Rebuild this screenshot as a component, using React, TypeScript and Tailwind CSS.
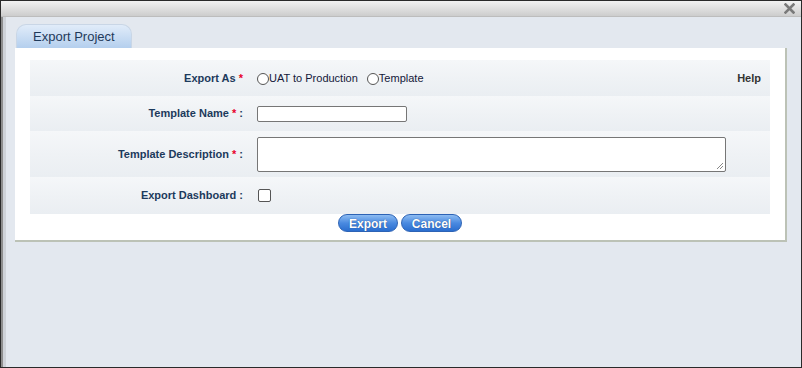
import React from "react"

const font = { fontFamily: '"Liberation Sans", Arial, sans-serif' }

function Label({ text, required, colon = true }: { text: string; required?: boolean; colon?: boolean }) {
  return (
    <div className="w-[215px] shrink-0 pr-[2px] text-right text-[11px] font-bold text-[#1c3a5c]">
      {text}
      {required ? <span className="text-[#e8002a]"> *</span> : null}
      {colon ? " :" : null}
    </div>
  )
}

function Row({ h, children }: { h: string; children: React.ReactNode }) {
  return (
    <div className={`flex items-center gap-[12px] bg-gradient-to-b from-[#f5f7f9] via-[#eff2f5] to-[#eaeef2] ${h}`}>
      {children}
    </div>
  )
}

function Radio({ label }: { label: string }) {
  return (
    <label className="flex items-center text-[11px] text-[#14183a]">
      <span className="mt-[1px] inline-block h-[12px] w-[12px] rounded-full border border-[#555] bg-white" />
      <span>{label}</span>
    </label>
  )
}

export default function App() {
  return (
    <div style={font} className="flex h-[368px] w-[802px] flex-col border border-[#2a2a2a] bg-[#e3e8ef]">
      {/* title bar */}
      <div className="flex h-[16px] shrink-0 items-center justify-end border-b border-[#bdbdbd] bg-gradient-to-b from-[#f2f2f2] to-[#cdcdcd] pr-[6px]">
        <svg width="11" height="11" viewBox="0 0 11 11">
          <path d="M1.5 1.5 L9.5 9.5 M9.5 1.5 L1.5 9.5" stroke="#7a7a7a" strokeWidth="2.6" strokeLinecap="square" />
        </svg>
      </div>

      <div className="flex flex-1 border-l-[2px] border-[#8e8e8e]">
        <div className="flex flex-1 flex-col border-l-[3px] border-[#cfd3d9] pl-[9px] pr-[14px] pt-[7px]">
          {/* tab */}
          <div className="flex">
            <div className="ml-[1px] flex h-[24px] items-center rounded-t-[10px] border border-b-0 border-[#c9d6e6] bg-gradient-to-b from-[#e1ecf9] to-[#b4cfee] px-[16px] text-[13px] text-[#1f3a5a]">
              Export Project
            </div>
          </div>

          {/* panel */}
          <div className="flex flex-col border-b-[2px] border-r-[2px] border-[#bcc2b6] bg-white px-[15px] pb-[8px] pt-[12px]">
            <Row h="h-[36px]">
              <Label text="Export As" required colon={false} />
              <div className="flex flex-1 items-center gap-[9px]">
                <Radio label="UAT to Production" />
                <Radio label="Template" />
              </div>
              <div className="pr-[9px] text-[11px] font-bold text-[#333]">Help</div>
            </Row>
            <Row h="h-[35px]">
              <Label text="Template Name" required />
              <div className="h-[16px] w-[150px] rounded-[2px] border border-[#767676] bg-white" />
            </Row>
            <Row h="h-[46px]">
              <Label text="Template Description" required />
              <div className="relative h-[35px] w-[469px] rounded-[2px] border border-[#767676] bg-white">
                <svg className="absolute bottom-[1px] right-[1px]" width="9" height="9" viewBox="0 0 9 9">
                  <path d="M8 2 L2 8 M8 5 L5 8" stroke="#888" strokeWidth="1" />
                </svg>
              </div>
            </Row>
            <Row h="h-[37px]">
              <Label text="Export Dashboard" />
              <div className="ml-[1px] h-[13px] w-[13px] rounded-[2px] border border-[#555] bg-white" />
            </Row>

            <div className="flex justify-center gap-[3px]">
              <button className="h-[18px] w-[60px] rounded-full border border-[#2d63b5] bg-gradient-to-b from-[#8dbcf2] via-[#4a8ae0] to-[#2a6ecf] text-[12px] font-bold text-white [text-shadow:0_0_1px_#1a3f7a]">
                Export
              </button>
              <button className="h-[18px] w-[61px] rounded-full border border-[#2d63b5] bg-gradient-to-b from-[#8dbcf2] via-[#4a8ae0] to-[#2a6ecf] text-[12px] font-bold text-white [text-shadow:0_0_1px_#1a3f7a]">
                Cancel
              </button>
            </div>
          </div>
        </div>
      </div>
    </div>
  )
}
